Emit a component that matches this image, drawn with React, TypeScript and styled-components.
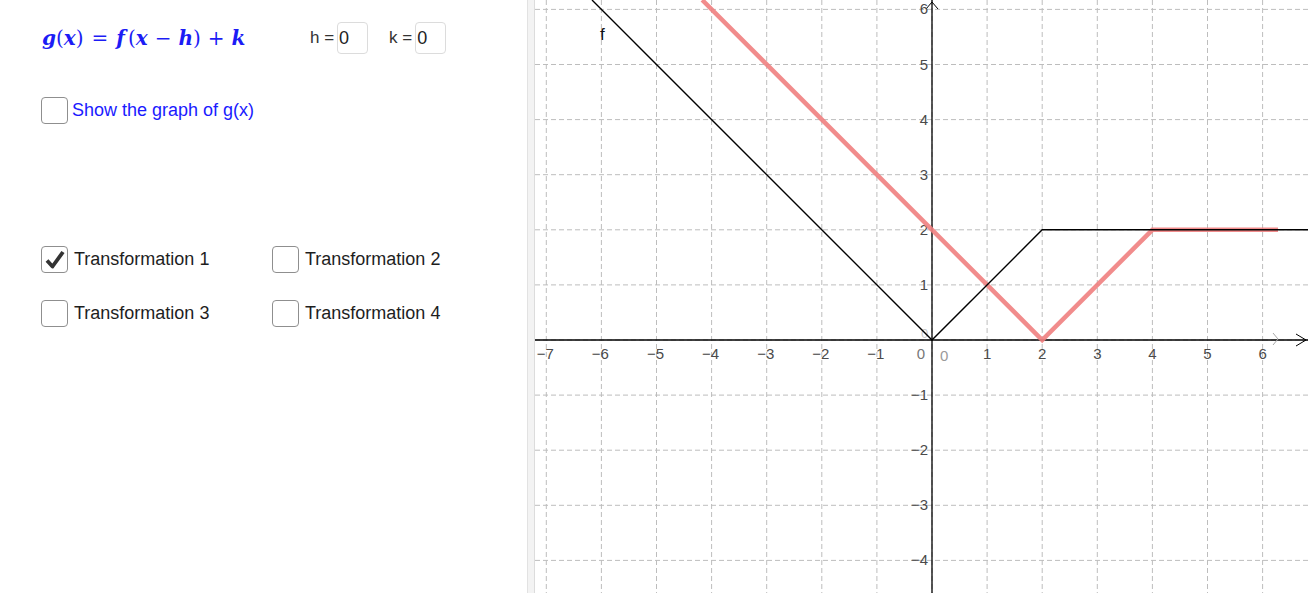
import * as React from 'react'
import styled, { createGlobalStyle } from 'styled-components'

const GlobalStyle = createGlobalStyle`
  html, body {
    margin: 0;
    padding: 0;
    background: #ffffff;
    font-family: 'Liberation Sans', Arial, sans-serif;
  }
`

// graph geometry (pixels inside the graphics view)
const VIEW_W = 773
const VIEW_H = 593
const OX = 397
const OY = 340
const UNIT = 55.1

const px = (x: number) => OX + x * UNIT
const py = (y: number) => OY - y * UNIT

const Page = styled.div`
  display: flex;
  width: 1308px;
  height: 593px;
  overflow: hidden;
`

const AlgebraPanel = styled.div`
  width: 527px;
  flex-shrink: 0;
  box-sizing: border-box;
  padding: 22px 0 0 41px;
  display: flex;
  flex-direction: column;
`

const Splitter = styled.div`
  width: 6px;
  flex-shrink: 0;
  background: #f3f3f3;
  border-left: 1px solid #e2e2e2;
  border-right: 1px solid #dcdcdc;
`

const GraphPanel = styled.div`
  flex: 1;
  position: relative;
  background: #ffffff;
`

const TopRow = styled.div`
  display: flex;
  align-items: center;
  height: 32px;
`

const Formula = styled.div`
  width: 268px;
  padding-left: 1px;
  color: #1c1cf5;
  font-family: 'DejaVu Serif', 'Liberation Serif', serif;
  font-size: 20px;
  font-weight: bold;
  white-space: nowrap;
`

const Var = styled.span<{ $after?: number }>`
  font-style: italic;
  margin-right: ${({ $after }) => $after ?? 0}px;
`

const Op = styled.span<{ $space?: number }>`
  font-style: normal;
  font-weight: normal;
  margin: 0 ${({ $space }) => $space ?? 0}px;
`

const Param = styled.label`
  display: flex;
  align-items: center;
  gap: 3px;
  margin-right: 21px;
  color: #333333;
  font-size: 17px;
`

const ValueBox = styled.div`
  width: 28px;
  height: 30px;
  box-sizing: content-box;
  border: 1px solid #dcdcdc;
  border-radius: 4px;
  padding-left: 1px;
  display: flex;
  align-items: center;
  font-size: 18px;
  color: #222222;
`

const ShowRow = styled.div`
  margin-top: 43px;
  display: flex;
  align-items: center;
`

const CheckGrid = styled.div`
  margin-top: 122px;
  display: grid;
  grid-template-columns: 231px 231px;
  row-gap: 27px;
`

const CheckItem = styled.div`
  display: flex;
  align-items: center;
`

const Box = styled.div`
  width: 25px;
  height: 25px;
  border: 1px solid #8f8f8f;
  border-radius: 4px;
  background: #ffffff;
  display: flex;
  align-items: center;
  justify-content: center;
  flex-shrink: 0;
`

const CheckLabel = styled.span<{ $blue?: boolean }>`
  margin-left: ${({ $blue }) => ($blue ? 4 : 6)}px;
  font-size: 18px;
  color: ${({ $blue }) => ($blue ? '#1a1aff' : '#1e1e1e')};
  white-space: nowrap;
`

const Check = ({ checked, label, blue }: { checked?: boolean; label: string; blue?: boolean }) => (
  <CheckItem>
    <Box>
      {checked && (
        <svg width="22" height="22" viewBox="0 0 22 22">
          <path d="M3 11.5 L8.5 17.5 L19 3" fill="none" stroke="#333" strokeWidth="3.8" strokeLinejoin="round" />
        </svg>
      )}
    </Box>
    <CheckLabel $blue={blue}>{label}</CheckLabel>
  </CheckItem>
)

const Graph = () => {
  const xs = Array.from({ length: 14 }, (_, i) => i - 7)
  const ys = Array.from({ length: 11 }, (_, i) => i - 4)
  const topY = OY / UNIT
  return (
    <svg width={VIEW_W} height={VIEW_H} viewBox={`0 0 ${VIEW_W} ${VIEW_H}`} style={{ display: 'block' }}>
      <g stroke="#bdbdbd" strokeWidth="1" strokeDasharray="5 3">
        {xs.map((x) => (
          <line key={'vx' + x} x1={px(x)} y1={0} x2={px(x)} y2={VIEW_H} />
        ))}
        {ys.map((y) => (
          <line key={'hy' + y} x1={0} y1={py(y)} x2={VIEW_W} y2={py(y)} />
        ))}
      </g>

      {/* axes */}
      <g stroke="#000" strokeWidth="1.3" fill="none">
        <line x1={0} y1={OY} x2={VIEW_W} y2={OY} />
        <line x1={OX} y1={0} x2={OX} y2={VIEW_H} />
        <path d={`M${VIEW_W - 12} ${OY - 6} L${VIEW_W - 2} ${OY} L${VIEW_W - 12} ${OY + 6}`} strokeWidth="1" />
        <path d={`M${OX - 6} ${9} L${OX} ${2} L${OX + 6} ${9}`} strokeWidth="1" />
      </g>
      <path d={`M${738} ${OY - 7} L${743} ${OY - 1} L${738} ${OY + 5}`} stroke="#a8a8a8" fill="none" strokeWidth="1" />

      {/* axis labels */}
      <g fill="#4a4a4a" fontSize="15" fontFamily="'Liberation Sans', Arial, sans-serif">
        {xs
          .filter((x) => x !== 0)
          .map((x) => (
            <text key={'lx' + x} x={px(x) + (x < 0 ? -1 : 0)} y={OY + 19} textAnchor="middle">
              {x < 0 ? `\u2212${-x}` : x}
            </text>
          ))}
        {ys
          .filter((y) => y !== 0)
          .map((y) => (
            <text key={'ly' + y} x={OX - 4} y={py(y) + 5} textAnchor="end">
              {y < 0 ? `\u2212${-y}` : y}
            </text>
          ))}
        <text x={OX - 7} y={OY + 19} textAnchor="end" fill="#777">
          0
        </text>
        <text x={OX + 8} y={OY + 21} fill="#9a9a9a" fontSize="15">
          0
        </text>
        <text x={OX - 11} y={OY - 2} fill="#c8c8c8" fontSize="13">
          0
        </text>
      </g>

      {/* g(x) = f(x - 2) */}
      <polyline
        points={`${px(2 - topY)},0 ${px(2)},${py(0)} ${px(4)},${py(2)} ${px(6.28)},${py(2)}`}
        fill="none"
        stroke="#f07f7f"
        strokeOpacity="0.9"
        strokeWidth="4.5"
        strokeLinejoin="miter"
      />

      {/* f */}
      <polyline
        points={`${px(-topY)},0 ${px(0)},${py(0)} ${px(2)},${py(2)} ${VIEW_W},${py(2)}`}
        fill="none"
        stroke="#000"
        strokeWidth="1.4"
      />
      <text x={65} y={40} fontSize="17" fontFamily="'Liberation Sans', Arial, sans-serif" fill="#111">
        f
      </text>
    </svg>
  )
}

export default function App() {
  return (
    <Page>
      <GlobalStyle />
      <AlgebraPanel>
        <TopRow>
          <Formula>
            <Var>g</Var>
            <Op>(</Op>
            <Var>x</Var>
            <Op>)</Op>
            <Op $space={8}>=</Op>
            <Var $after={3}>f</Var>
            <Op>(</Op>
            <Var>x</Var>
            <Op $space={7}>{'\u2212'}</Op>
            <Var>h</Var>
            <Op>)</Op>
            <Op $space={7}>+</Op>
            <Var>k</Var>
          </Formula>
          <Param>
            h =<ValueBox>0</ValueBox>
          </Param>
          <Param>
            k =<ValueBox>0</ValueBox>
          </Param>
        </TopRow>

        <ShowRow>
          <Check label="Show the graph of g(x)" blue />
        </ShowRow>

        <CheckGrid>
          <Check checked label="Transformation 1" />
          <Check label="Transformation 2" />
          <Check label="Transformation 3" />
          <Check label="Transformation 4" />
        </CheckGrid>
      </AlgebraPanel>
      <Splitter />
      <GraphPanel>
        <Graph />
      </GraphPanel>
    </Page>
  )
}
